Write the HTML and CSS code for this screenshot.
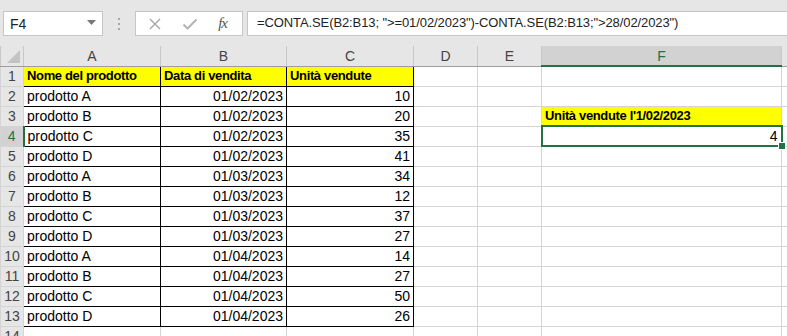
FILE: index.html
```html
<html lang="it">
<head>
  <meta charset="UTF-8">
  <title>Foglio1</title>
  <link rel="stylesheet" href="styles.css">
</head>
<body>

  <div class="toolbar">
    <div class="namebox">
      <span>F4</span>
      <svg class="caret" width="9" height="5" viewBox="0 0 9 5"><path d="M0 0h9L4.5 5z" fill="#777"/></svg>
    </div>
    <div class="grip">
      <i></i><i></i><i></i>
    </div>
    <div class="buttons">
      <svg width="14" height="14" viewBox="0 0 14 14"><path d="M2 2l10 10M12 2L2 12" stroke="#a6a6a6" stroke-width="1.4" fill="none"/></svg>
      <svg width="16" height="14" viewBox="0 0 16 14"><path d="M1.5 7.5l4 4L14.5 2.5" stroke="#b4b4b4" stroke-width="2" fill="none"/></svg>
      <span class="fx">fx</span>
    </div>
    <div class="formula">=CONTA.SE(B2:B13; "&gt;=01/02/2023")-CONTA.SE(B2:B13;"&gt;28/02/2023")</div>
  </div>

  <table class="sheet">
    <colgroup>
      <col class="c-hd"><col class="c-a"><col class="c-b"><col class="c-c"><col class="c-d"><col class="c-e"><col class="c-f"><col class="c-g">
    </colgroup>
    <tr class="colheads">
      <th class="corner"><span class="tri"></span></th>
      <th>A</th><th>B</th><th>C</th><th>D</th><th>E</th><th class="sel">F</th><th></th>
    </tr>
    <tr>
      <th class="rh">1</th>
      <td class="t hl b">Nome del prodotto</td><td class="t hl b">Data di vendita</td><td class="t hl b">Unità vendute</td>
      <td></td><td></td><td></td><td></td>
    </tr>
    <tr>
      <th class="rh">2</th>
      <td class="t">prodotto A</td><td class="t n">01/02/2023</td><td class="t n">10</td>
      <td></td><td></td><td></td><td></td>
    </tr>
    <tr>
      <th class="rh">3</th>
      <td class="t">prodotto B</td><td class="t n">01/02/2023</td><td class="t n">20</td>
      <td></td><td></td><td class="hl b">Unità vendute l'1/02/2023</td><td></td>
    </tr>
    <tr>
      <th class="rh rsel">4</th>
      <td class="t">prodotto C</td><td class="t n">01/02/2023</td><td class="t n">35</td>
      <td></td><td></td><td class="n active">4<span class="handle"></span></td><td></td>
    </tr>
    <tr>
      <th class="rh">5</th>
      <td class="t">prodotto D</td><td class="t n">01/02/2023</td><td class="t n">41</td>
      <td></td><td></td><td></td><td></td>
    </tr>
    <tr>
      <th class="rh">6</th>
      <td class="t">prodotto A</td><td class="t n">01/03/2023</td><td class="t n">34</td>
      <td></td><td></td><td></td><td></td>
    </tr>
    <tr>
      <th class="rh">7</th>
      <td class="t">prodotto B</td><td class="t n">01/03/2023</td><td class="t n">12</td>
      <td></td><td></td><td></td><td></td>
    </tr>
    <tr>
      <th class="rh">8</th>
      <td class="t">prodotto C</td><td class="t n">01/03/2023</td><td class="t n">37</td>
      <td></td><td></td><td></td><td></td>
    </tr>
    <tr>
      <th class="rh">9</th>
      <td class="t">prodotto D</td><td class="t n">01/03/2023</td><td class="t n">27</td>
      <td></td><td></td><td></td><td></td>
    </tr>
    <tr>
      <th class="rh">10</th>
      <td class="t">prodotto A</td><td class="t n">01/04/2023</td><td class="t n">14</td>
      <td></td><td></td><td></td><td></td>
    </tr>
    <tr>
      <th class="rh">11</th>
      <td class="t">prodotto B</td><td class="t n">01/04/2023</td><td class="t n">27</td>
      <td></td><td></td><td></td><td></td>
    </tr>
    <tr>
      <th class="rh">12</th>
      <td class="t">prodotto C</td><td class="t n">01/04/2023</td><td class="t n">50</td>
      <td></td><td></td><td></td><td></td>
    </tr>
    <tr>
      <th class="rh">13</th>
      <td class="t">prodotto D</td><td class="t n">01/04/2023</td><td class="t n">26</td>
      <td></td><td></td><td></td><td></td>
    </tr>
    <tr>
      <th class="rh">14</th>
      <td></td><td></td><td></td><td></td><td></td><td></td><td></td>
    </tr>
  </table>

</body>
</html>
```

FILE: styles.css
```css
body {
  margin: 0;
  padding: 0;
  background: white;
  font-family: 'Liberation Sans', Arial, sans-serif;
  overflow: hidden;
  width: 787px;
  height: 336px;
}

.toolbar {
  height: 46px;
  background: #e6e6e6;
  display: flex;
  align-items: flex-start;
  padding-top: 11px;
  box-sizing: border-box;
  padding-left: 3px;
}

.namebox {
  width: 100px;
  height: 25px;
  box-sizing: border-box;
  background: white;
  border: 1px solid #c6c6c6;
  display: flex;
  align-items: center;
  justify-content: space-between;
  padding: 0 6px 0 6px;
  font-size: 14px;
  color: #222;
}

.caret {
  margin-bottom: 2px;
}

.grip {
  width: 32px;
  height: 25px;
  display: flex;
  flex-direction: column;
  align-items: center;
  justify-content: center;
  gap: 3px;
}

.grip i {
  width: 2px;
  height: 2px;
  background: #a8a8a8;
}

.buttons {
  width: 108px;
  height: 25px;
  box-sizing: border-box;
  background: white;
  border: 1px solid #c6c6c6;
  display: flex;
  align-items: center;
  justify-content: space-between;
  padding: 0 15px 0 12px;
}

.fx {
  font-family: 'Liberation Serif', serif;
  font-style: italic;
  font-size: 15px;
  color: #555;
  letter-spacing: -1px;
}

.formula {
  flex: 1;
  height: 25px;
  margin-left: 4px;
  box-sizing: border-box;
  background: white;
  border: 1px solid #c6c6c6;
  border-right: none;
  padding: 3px 0 0 9px;
  font-size: 13px;
  letter-spacing: -0.1px;
  color: #222;
  white-space: nowrap;
}

.sheet {
  border-collapse: collapse;
  table-layout: fixed;
  width: 830px;
  font-size: 14px;
}

.c-hd { width: 23px; }
.c-a { width: 137px; }
.c-b { width: 126px; }
.c-c { width: 127px; }
.c-d { width: 64px; }
.c-e { width: 64px; }
.c-f { width: 240px; }
.c-g { width: 49px; }

.sheet td, .sheet th {
  height: 20px;
  padding: 0 3px;
  border: 1px solid #d4d4d4;
  box-sizing: border-box;
  white-space: nowrap;
  overflow: hidden;
  line-height: 18px;
}

.sheet tr:first-child th {
  border-top: none;
}

.colheads th {
  height: 20px;
  background: #e6e6e6;
  font-weight: normal;
  color: #444;
  text-align: center;
  border-color: #bfbfbf #c8c8c8 #9e9e9e #c8c8c8;
}

.colheads th.sel {
  background: #d2d2d2;
  color: #217346;
  border-bottom: 2px solid #217346;
}

.corner {
  position: relative;
}

.tri {
  position: absolute;
  right: 3px;
  bottom: 3px;
  width: 0;
  height: 0;
  border-left: 13px solid transparent;
  border-bottom: 13px solid #c3c3c3;
}

.rh {
  background: #e6e6e6;
  font-weight: normal;
  color: #444;
  text-align: center;
  padding: 0;
  border-color: #c8c8c8 #9e9e9e #c8c8c8 #c8c8c8;
}

.rh.rsel {
  background: #d2d2d2;
  color: #217346;
  border-right: 2px solid #217346;
}

.sheet td.t {
  border: 1px solid #000;
}

.hl {
  background: #ffff00;
}

.b {
  font-weight: bold;
  font-size: 13px;
  letter-spacing: -0.35px;
}

.n {
  text-align: right;
}

.sheet td.active {
  position: relative;
  overflow: visible;
  border: 2px solid #217346;
}

.handle {
  position: absolute;
  right: -5px;
  bottom: -5px;
  width: 6px;
  height: 6px;
  background: #217346;
  border: 1px solid white;
}
```
